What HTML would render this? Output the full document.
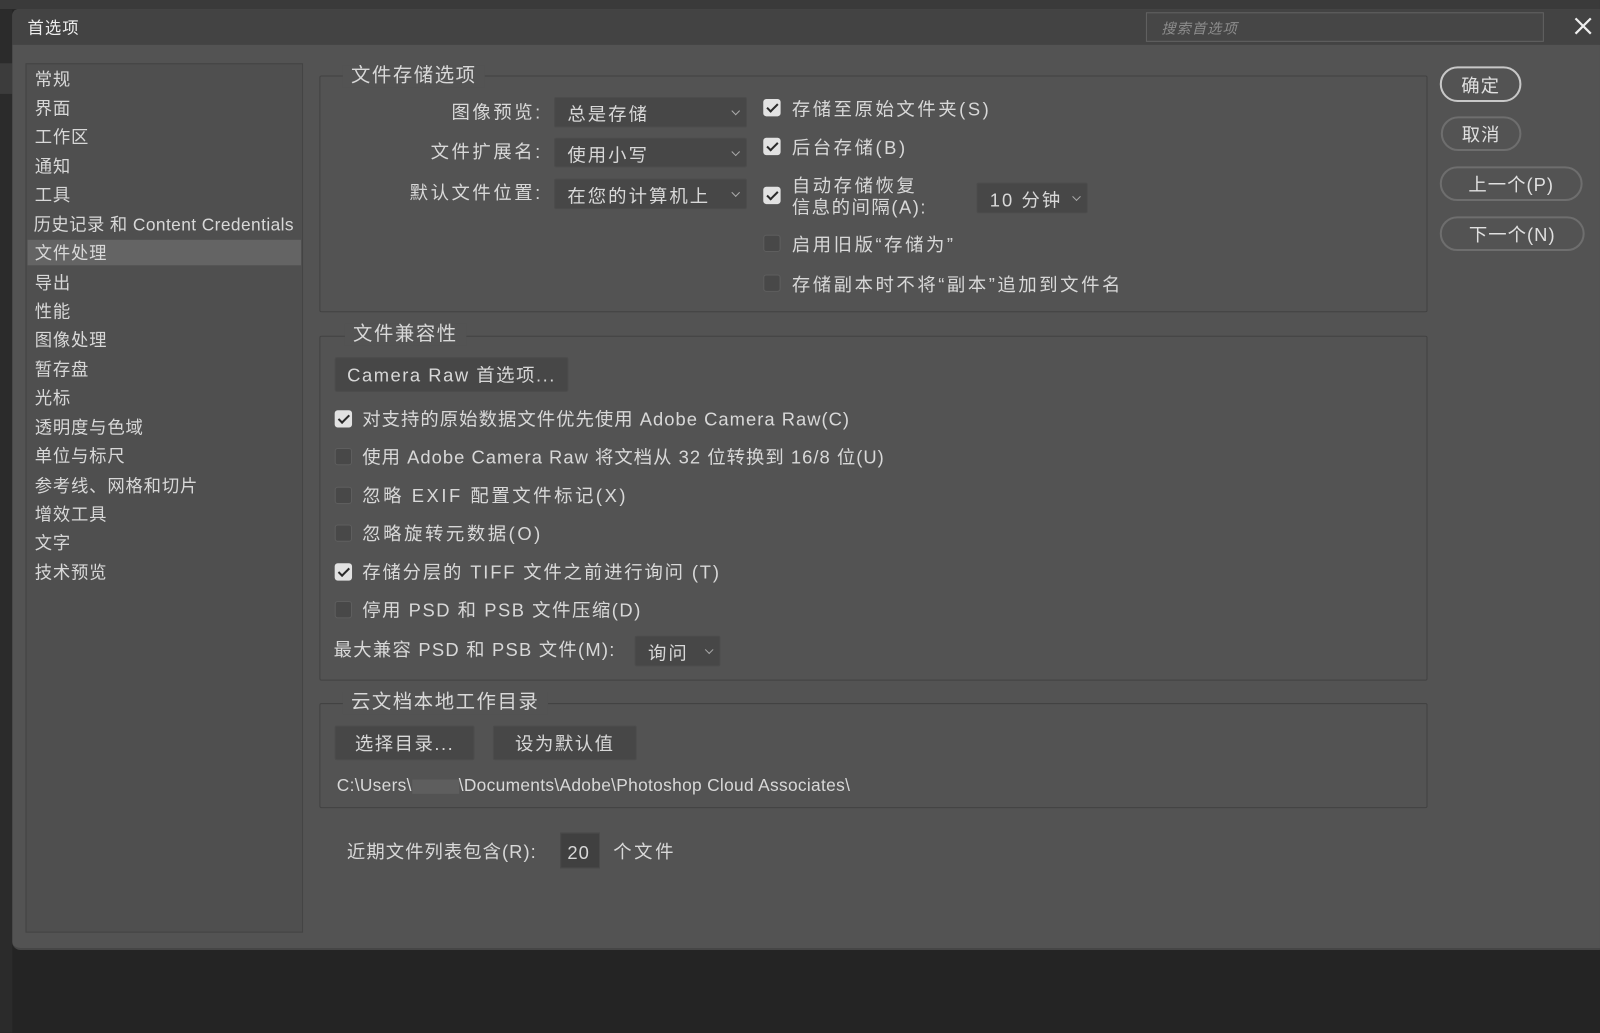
<!DOCTYPE html>
<html><head><meta charset="utf-8"><style>
html,body{margin:0;padding:0;width:1600px;height:1033px;overflow:hidden;background:#242424;}
#w{position:absolute;left:0;top:0;width:1568px;height:1012px;transform:scale(1.0204);transform-origin:0 0;font-family:"Liberation Sans","Noto Sans CJK SC",sans-serif;color:#d8d8d8;}
.a{position:absolute;white-space:nowrap;}
.t{position:absolute;white-space:nowrap;font-size:18px;line-height:20px;transform:translateY(-9px);letter-spacing:1px;}
.sb .t{font-size:17px;letter-spacing:0.8px;}
.w2{letter-spacing:2.5px;}
.grp{position:absolute;border:1px solid #424242;border-radius:2px;}
.lg{position:absolute;background:#535353;padding:0 8px;font-size:19px;line-height:22px;transform:translateY(-10px);letter-spacing:1.5px;}
.dd{position:absolute;background:#474747;border:1px solid #4c4c4c;border-radius:2px;box-sizing:border-box;}
.dd span{position:absolute;left:12px;top:50%;transform:translateY(-45%);font-size:18px;letter-spacing:2px;}
.dd i{position:absolute;right:7px;top:50%;width:5px;height:5px;border-right:1px solid #aaa;border-bottom:1px solid #aaa;transform:translateY(-70%) rotate(45deg);}
.cb{position:absolute;width:17px;height:17px;border-radius:3px;background:#484848;border:1px solid #5e5e5e;box-sizing:border-box;transform:translateY(-8px);}
.cb.on{background:#e2e2e2;border-color:#e2e2e2;}
.cb.on::after{content:"";position:absolute;left:5px;top:1px;width:4px;height:9px;border-right:2.5px solid #2a2a2a;border-bottom:2.5px solid #2a2a2a;transform:rotate(45deg);}
.bt{position:absolute;background:#474747;border:1px solid #4c4c4c;border-radius:2px;box-sizing:border-box;font-size:18px;display:flex;align-items:center;justify-content:center;letter-spacing:1.5px;}
.pl{position:absolute;border:2px solid #6e6e6e;border-radius:18px;box-sizing:border-box;display:flex;align-items:center;justify-content:center;font-size:18px;color:#e0e0e0;letter-spacing:1px;}
</style></head><body><div id="w">
<div class="a" style="left:0;top:0;width:1568px;height:9px;background:#3a3a3a"></div>
<div class="a" style="left:0;top:9px;width:12px;height:1003px;background:#2b2b2b"></div>
<div class="a" style="left:0;top:62px;width:12px;height:30px;background:#3c3c3c"></div>
<div class="a" style="left:12px;top:9px;width:1556px;height:920px;background:#535353;border-radius:6px 0 0 8px;border-bottom:2px solid #464646"></div>
<div class="a" style="left:12px;top:9px;width:1556px;height:35px;background:#434343;border-radius:6px 0 0 0"></div>
<div class="t" style="left:27px;top:28px;font-size:16px;color:#eee">首选项</div>
<div class="a" style="left:1123px;top:12px;width:390px;height:29px;border:1px solid #626262;background:#464646;box-sizing:border-box"></div>
<div class="t" style="left:1138px;top:27px;font-size:14px;color:#8c8c8c;font-style:italic">搜索首选项</div>
<svg class="a" style="left:1543px;top:17px" width="17" height="17" viewBox="0 0 17 17"><path d="M1 1L16 16M16 1L1 16" stroke="#eee" stroke-width="2.2"/></svg>

<div class="a sb" style="left:25px;top:62px;width:272px;height:852px;background:#4f4f4f;border:1px solid #434343;box-sizing:border-box"></div>
<div class="a" style="left:27px;top:235px;width:268px;height:25px;background:#646464"></div>
<div class="sb">
<div class="t" style="left:34px;top:78px">常规</div>
<div class="t" style="left:34px;top:106px">界面</div>
<div class="t" style="left:34px;top:134px">工作区</div>
<div class="t" style="left:34px;top:163px">通知</div>
<div class="t" style="left:34px;top:191px">工具</div>
<div class="t" style="left:33px;top:220px;letter-spacing:0.4px">历史记录 和 Content Credentials</div>
<div class="t" style="left:34px;top:248px">文件处理</div>
<div class="t" style="left:34px;top:277px">导出</div>
<div class="t" style="left:34px;top:305px">性能</div>
<div class="t" style="left:34px;top:333px">图像处理</div>
<div class="t" style="left:34px;top:362px">暂存盘</div>
<div class="t" style="left:34px;top:390px">光标</div>
<div class="t" style="left:34px;top:419px">透明度与色域</div>
<div class="t" style="left:34px;top:447px">单位与标尺</div>
<div class="t" style="left:34px;top:476px">参考线、网格和切片</div>
<div class="t" style="left:34px;top:504px">增效工具</div>
<div class="t" style="left:34px;top:532px">文字</div>
<div class="t" style="left:34px;top:561px">技术预览</div>
</div>

<div class="grp" style="left:313px;top:74px;width:1084px;height:230px"></div>
<div class="lg" style="left:336px;top:74px">文件存储选项</div>
<div class="t w2" style="right:1036px;top:109px">图像预览:</div>
<div class="t w2" style="right:1036px;top:148px">文件扩展名:</div>
<div class="t w2" style="right:1036px;top:188px">默认文件位置:</div>
<div class="dd" style="left:543px;top:95px;width:189px;height:30px"><span>总是存储</span><i></i></div>
<div class="dd" style="left:543px;top:135px;width:189px;height:29px"><span>使用小写</span><i></i></div>
<div class="dd" style="left:543px;top:175px;width:189px;height:30px"><span>在您的计算机上</span><i></i></div>
<div class="cb on" style="left:748px;top:105px"></div><div class="t w2" style="left:776px;top:106px">存储至原始文件夹(S)</div>
<div class="cb on" style="left:748px;top:143px"></div><div class="t w2" style="left:776px;top:144px">后台存储(B)</div>
<div class="cb on" style="left:748px;top:191px"></div>
<div class="t w2" style="left:776px;top:181px">自动存储恢复</div>
<div class="t" style="left:776px;top:202px;letter-spacing:1.5px">信息的间隔(A):</div>
<div class="dd" style="left:957px;top:179px;width:109px;height:30px"><span>10 分钟</span><i></i></div>
<div class="cb" style="left:748px;top:238px"></div><div class="t w2" style="left:776px;top:239px">启用旧版“存储为”</div>
<div class="cb" style="left:748px;top:277px"></div><div class="t w2" style="left:776px;top:278px">存储副本时不将“副本”追加到文件名</div>

<div class="grp" style="left:313px;top:329px;width:1084px;height:336px"></div>
<div class="lg" style="left:338px;top:327px">文件兼容性</div>
<div class="bt" style="left:328px;top:350px;width:229px;height:34px">Camera Raw 首选项...</div>
<div class="cb on" style="left:328px;top:410px"></div><div class="t" style="left:355px;top:410px">对支持的原始数据文件优先使用 Adobe Camera Raw(C)</div>
<div class="cb" style="left:328px;top:447px"></div><div class="t" style="left:355px;top:447px">使用 Adobe Camera Raw 将文档从 32 位转换到 16/8 位(U)</div>
<div class="cb" style="left:328px;top:485px"></div><div class="t w2" style="left:355px;top:485px">忽略 EXIF 配置文件标记(X)</div>
<div class="cb" style="left:328px;top:522px"></div><div class="t w2" style="left:355px;top:522px">忽略旋转元数据(O)</div>
<div class="cb on" style="left:328px;top:560px"></div><div class="t" style="left:355px;top:560px;letter-spacing:1.8px">存储分层的 TIFF 文件之前进行询问 (T)</div>
<div class="cb" style="left:328px;top:597px"></div><div class="t" style="left:355px;top:597px;letter-spacing:1.5px">停用 PSD 和 PSB 文件压缩(D)</div>
<div class="t" style="left:327px;top:636px;letter-spacing:1.2px">最大兼容 PSD 和 PSB 文件(M):</div>
<div class="dd" style="left:622px;top:623px;width:84px;height:30px"><span>询问</span><i></i></div>

<div class="grp" style="left:313px;top:689px;width:1084px;height:101px"></div>
<div class="lg" style="left:336px;top:688px">云文档本地工作目录</div>
<div class="bt" style="left:328px;top:711px;width:137px;height:34px">选择目录...</div>
<div class="bt" style="left:483px;top:711px;width:141px;height:34px">设为默认值</div>
<div class="t" style="left:330px;top:769px;font-size:17px;letter-spacing:0.3px">C:\Users\<span style="display:inline-block;width:46px;height:14px;background:#6a6a6a;opacity:.5;vertical-align:middle"></span>\Documents\Adobe\Photoshop Cloud Associates\</div>

<div class="t" style="left:340px;top:834px">近期文件列表包含(R):</div>
<div class="a" style="left:549px;top:816px;width:39px;height:35px;background:#404040;border:1px solid #4a4a4a;box-sizing:border-box"></div>
<div class="t" style="left:556px;top:835px">20</div>
<div class="t w2" style="left:601px;top:834px">个文件</div>

<div class="pl" style="left:1411px;top:65px;width:80px;height:35px;border-color:#c8c8c8">确定</div>
<div class="pl" style="left:1412px;top:114px;width:79px;height:34px">取消</div>
<div class="pl" style="left:1411px;top:163px;width:140px;height:34px">上一个(P)</div>
<div class="pl" style="left:1411px;top:212px;width:142px;height:34px">下一个(N)</div>
</div></body></html>
